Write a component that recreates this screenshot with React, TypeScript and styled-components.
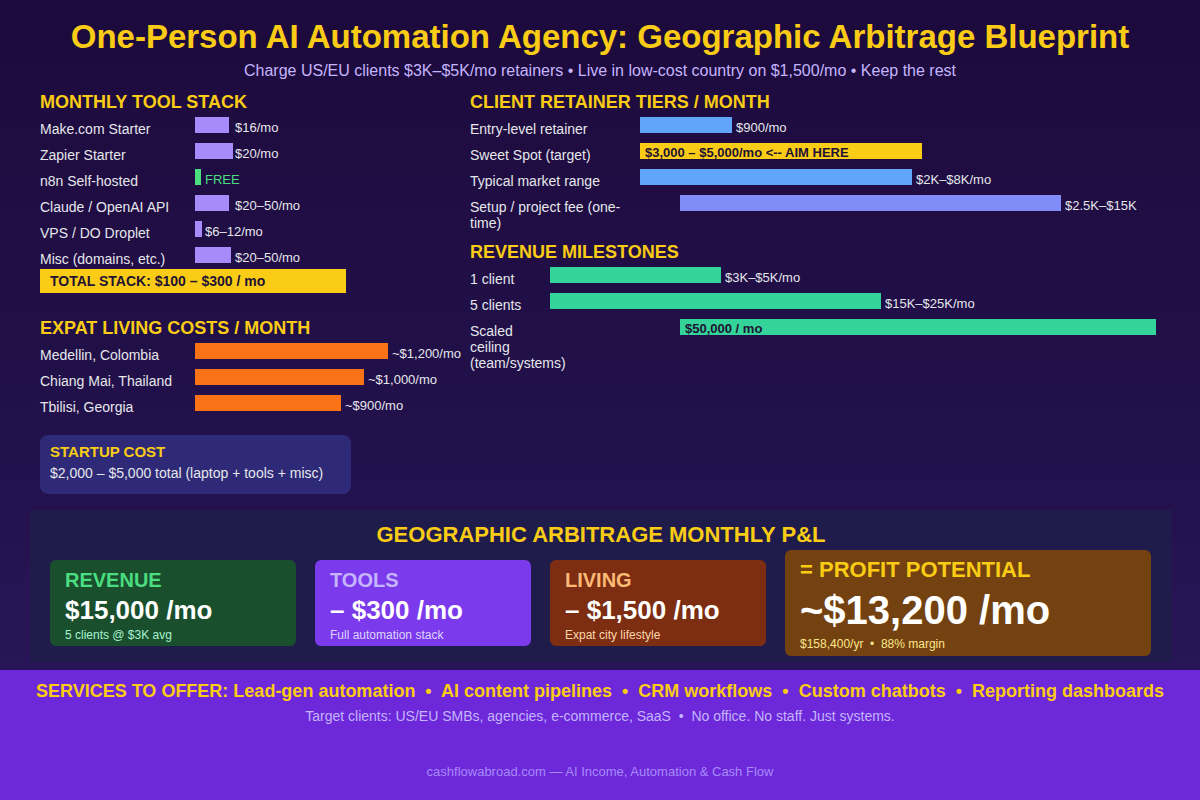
import React from "react";
import styled, { createGlobalStyle } from "styled-components";

const Global = createGlobalStyle`
  html, body { margin: 0; padding: 0; }
  body { font-family: "Liberation Sans", Arial, sans-serif; background: #1c0c3c; }
`;

const Page = styled.div`
  width: 1200px; height: 800px; overflow: hidden;
  display: flex; flex-direction: column;
  background: linear-gradient(180deg, #1d0a3c 0%, #22104a 50%, #2a185e 100%);
`;
const Top = styled.div`flex: 1; display: flex; flex-direction: column;`;
const Title = styled.h1`
  margin: 18px 0 0; text-align: center; color: #facc15; font-size: 33px; font-weight: 700; line-height: 38px;
`;
const Sub = styled.div`
  margin-top: 5px; text-align: center; color: #c4b5fd; font-size: 16px; line-height: 20px;
`;
const Cols = styled.div`display: flex; padding: 10px 0 0 40px;`;
const Col = styled.div<{ w: number }>`width: ${p => p.w}px; display: flex; flex-direction: column;`;
const H2 = styled.h2<{ mt?: number }>`
  margin: ${p => p.mt ?? 0}px 0 4px; color: #facc15; font-size: 18px; font-weight: 700; line-height: 22px;
`;
const Row = styled.div<{ lw: number }>`
  display: grid; grid-template-columns: ${p => p.lw}px auto; height: 26px; align-items: start;
`;
const Label = styled.div`color: #e5e7eb; font-size: 14px; line-height: 16px; padding-top: 4px;`;
const BarWrap = styled.div`display: flex; align-items: flex-start;`;
const Bar = styled.div<{ c: string }>`
  height: 16px; background: ${p => p.c}; flex: none; position: relative;
  color: #1f1233; font-weight: 700; font-size: 13px; line-height: 20px; padding-left: 5px; box-sizing: border-box; overflow: hidden; white-space: nowrap;
`;
const Val = styled.span<{ c?: string }>`
  color: ${p => p.c ?? "#e5e7eb"}; font-size: 13px; line-height: 16px; padding-top: 3px; margin-left: 4px;
`;
const Total = styled.div`
  width: 306px; height: 24px; background: #facc15; color: #1f1233; font-weight: 700; font-size: 14px;
  line-height: 24px; padding-left: 10px; box-sizing: border-box; margin-top: -4px;
`;
const Startup = styled.div`
  margin-top: 14px; width: 311px; height: 59px; background: #2f2a78; border-radius: 8px;
  padding: 8px 10px; box-sizing: border-box;
`;
const StartupH = styled.div`color: #facc15; font-weight: 700; font-size: 15px; line-height: 18px;`;
const StartupT = styled.div`color: #e5e7eb; font-size: 14px; line-height: 18px; margin-top: 3px;`;

const PL = styled.div`
  margin: 0 28px 8px 30px; background: #1f1c4b; padding: 12px 20px 6px; display: flex; flex-direction: column;
`;
const PLTitle = styled.div`text-align: center; color: #facc15; font-size: 22px; font-weight: 700; line-height: 26px;`;
const Cards = styled.div`display: flex; align-items: flex-start; gap: 19px; margin-top: 2px;`;
const Card = styled.div<{ bg: string; w: number; big?: boolean }>`
  background: ${p => p.bg}; width: ${p => p.w}px; height: ${p => (p.big ? 106 : 86)}px;
  margin-top: ${p => (p.big ? 0 : 10)}px; border-radius: 6px; box-sizing: border-box; padding: ${p => (p.big ? "7px 15px" : "8px 15px")};
`;
const CardH = styled.div<{ c: string; big?: boolean }>`
  color: ${p => p.c}; font-weight: 700; font-size: ${p => (p.big ? 22 : 20)}px; line-height: ${p => (p.big ? 26 : 24)}px;
`;
const CardV = styled.div<{ big?: boolean }>`
  color: #fff; font-weight: 700; font-size: ${p => (p.big ? 40 : 26)}px; line-height: ${p => (p.big ? 50 : 32)}px; margin-top: 2px;
`;
const CardS = styled.div<{ c: string }>`color: ${p => p.c}; font-size: 12px; line-height: 16px; margin-top: 1px;`;

const Bottom = styled.div`
  height: 130px; background: #6d28d9; display: flex; flex-direction: column; align-items: center;
`;
const Services = styled.div`color: #facc15; font-weight: 700; font-size: 18px; line-height: 22px; margin-top: 10px;`;
const Target = styled.div`color: #c4b5fd; font-size: 14px; line-height: 18px; margin-top: 5px;`;
const Foot = styled.div`color: #a78bfa; font-size: 13px; line-height: 16px; margin-top: 39px;`;

type R = { l: string; w: number; c: string; v?: string; vc?: string; off?: number; inner?: string; gap?: number };

const tools: R[] = [
  { l: "Make.com Starter", w: 34, c: "#a78bfa", v: "$16/mo", gap: 6 },
  { l: "Zapier Starter", w: 38, c: "#a78bfa", v: "$20/mo", gap: 2 },
  { l: "n8n Self-hosted", w: 6, c: "#4ade80", v: "FREE", vc: "#4ade80" },
  { l: "Claude / OpenAI API", w: 34, c: "#a78bfa", v: "$20–50/mo", gap: 6 },
  { l: "VPS / DO Droplet", w: 7, c: "#a78bfa", v: "$6–12/mo", gap: 3 },
  { l: "Misc (domains, etc.)", w: 36, c: "#a78bfa", v: "$20–50/mo", gap: 4 },
];
const living: R[] = [
  { l: "Medellin, Colombia", w: 193, c: "#f97316", v: "~$1,200/mo" },
  { l: "Chiang Mai, Thailand", w: 169, c: "#f97316", v: "~$1,000/mo" },
  { l: "Tbilisi, Georgia", w: 146, c: "#f97316", v: "~$900/mo" },
];
const tiers: R[] = [
  { l: "Entry-level retainer", w: 92, c: "#60a5fa", v: "$900/mo" },
  { l: "Sweet Spot (target)", w: 282, c: "#facc15", inner: "$3,000 – $5,000/mo  <-- AIM HERE" },
  { l: "Typical market range", w: 272, c: "#60a5fa", v: "$2K–$8K/mo" },
  { l: "Setup / project fee (one-time)", w: 381, c: "#818cf8", v: "$2.5K–$15K", off: 40 },
];
const miles: R[] = [
  { l: "1 client", w: 171, c: "#34d399", v: "$3K–$5K/mo" },
  { l: "5 clients", w: 331, c: "#34d399", v: "$15K–$25K/mo" },
  { l: "Scaled ceiling (team/systems)", w: 476, c: "#34d399", inner: "$50,000 / mo", off: 130 },
];

const Rows = ({ rows, lw }: { rows: R[]; lw: number }) => (
  <>
    {rows.map(r => (
      <Row key={r.l} lw={lw}>
        <Label>{r.l}</Label>
        <BarWrap>
          <Bar c={r.c} style={{ width: r.w, marginLeft: r.off ?? 0 }}>{r.inner}</Bar>
          {r.v && <Val c={r.vc} style={{ marginLeft: r.gap ?? 4 }}>{r.v}</Val>}
        </BarWrap>
      </Row>
    ))}
  </>
);

export default function App() {
  return (
    <Page>
      <Global />
      <Top>
        <Title>One-Person AI Automation Agency: Geographic Arbitrage Blueprint</Title>
        <Sub>Charge US/EU clients $3K–$5K/mo retainers • Live in low-cost country on $1,500/mo • Keep the rest</Sub>
        <Cols>
          <Col w={430}>
            <H2>MONTHLY TOOL STACK</H2>
            <Rows rows={tools} lw={155} />
            <Total>TOTAL STACK: $100 – $300 / mo</Total>
            <H2 mt={24}>EXPAT LIVING COSTS / MONTH</H2>
            <Rows rows={living} lw={155} />
            <Startup>
              <StartupH>STARTUP COST</StartupH>
              <StartupT>$2,000 – $5,000 total (laptop + tools + misc)</StartupT>
            </Startup>
          </Col>
          <Col w={700}>
            <H2>CLIENT RETAINER TIERS / MONTH</H2>
            <Rows rows={tiers} lw={170} />
            <H2 mt={20}>REVENUE MILESTONES</H2>
            <Rows rows={miles} lw={80} />
          </Col>
        </Cols>
      </Top>
      <PL>
        <PLTitle>GEOGRAPHIC ARBITRAGE MONTHLY P&amp;L</PLTitle>
        <Cards>
          <Card bg="#1a4f2e" w={246}>
            <CardH c="#4ade80">REVENUE</CardH>
            <CardV>$15,000 /mo</CardV>
            <CardS c="#a7f3d0">5 clients @ $3K avg</CardS>
          </Card>
          <Card bg="#7c3aed" w={216}>
            <CardH c="#c4b5fd">TOOLS</CardH>
            <CardV>– $300 /mo</CardV>
            <CardS c="#ddd6fe">Full automation stack</CardS>
          </Card>
          <Card bg="#7c2d12" w={216}>
            <CardH c="#fdba74">LIVING</CardH>
            <CardV>– $1,500 /mo</CardV>
            <CardS c="#fed7aa">Expat city lifestyle</CardS>
          </Card>
          <Card bg="#744210" w={366} big>
            <CardH c="#facc15" big>= PROFIT POTENTIAL</CardH>
            <CardV big>~$13,200 /mo</CardV>
            <CardS c="#fde68a">$158,400/yr &nbsp;•&nbsp; 88% margin</CardS>
          </Card>
        </Cards>
      </PL>
      <Bottom>
        <Services>SERVICES TO OFFER: Lead-gen automation &nbsp;•&nbsp; AI content pipelines &nbsp;•&nbsp; CRM workflows &nbsp;•&nbsp; Custom chatbots &nbsp;•&nbsp; Reporting dashboards</Services>
        <Target>Target clients: US/EU SMBs, agencies, e-commerce, SaaS &nbsp;•&nbsp; No office. No staff. Just systems.</Target>
        <Foot>cashflowabroad.com — AI Income, Automation &amp; Cash Flow</Foot>
      </Bottom>
    </Page>
  );
}
